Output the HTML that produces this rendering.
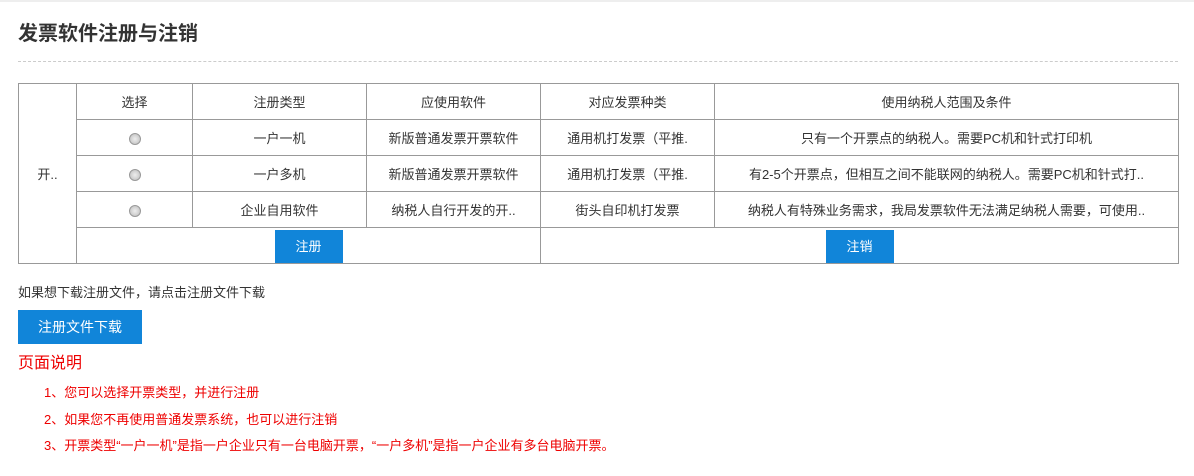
<!DOCTYPE html>
<html><head><meta charset="utf-8"><style>
body{margin:0;background:#fff;font-family:"Liberation Sans","Noto Sans CJK SC",sans-serif;color:#333;font-size:13px;width:1194px;height:476px;overflow:hidden;position:relative}
.top{position:absolute;left:0;top:0;width:1194px;height:2px;background:#eee}
h1{position:absolute;left:18px;top:19px;margin:0;font-size:20px;font-weight:bold;color:#333;line-height:30px}
.dash{position:absolute;left:18px;top:61px;width:1160px;border-top:1px dashed #ccc}
table{position:absolute;left:18px;top:83px;border-collapse:collapse;table-layout:fixed}
td{border:1px solid #999;height:35px;padding:0;text-align:center;white-space:nowrap;overflow:hidden;font-size:13px;vertical-align:middle}
.rad{display:inline-block;width:10px;height:10px;border-radius:50%;border:1px solid #999;background:radial-gradient(#eee,#bbb);vertical-align:middle}
.btn{display:inline-block;background:#1185d9;color:#fff;text-align:center}
.p{position:absolute;left:18px;top:283px;line-height:20px}
.b2{position:absolute;left:18px;top:310px;width:124px;height:34px;line-height:34px;font-size:14px}
.h2{position:absolute;left:18px;top:352px;color:#e00;font-size:16px;line-height:24px}
.li{position:absolute;left:44px;color:#e00;font-size:13px;line-height:20px}
</style></head><body>
<div class="top"></div>
<h1>发票软件注册与注销</h1>
<div class="dash"></div>
<table>
<colgroup><col style="width:58px"><col style="width:116px"><col style="width:174px"><col style="width:174px"><col style="width:174px"><col style="width:464px"></colgroup>
<tr><td rowspan="5">开..</td><td>选择</td><td>注册类型</td><td>应使用软件</td><td>对应发票种类</td><td>使用纳税人范围及条件</td></tr>
<tr><td><span class="rad"></span></td><td>一户一机</td><td>新版普通发票开票软件</td><td>通用机打发票（平推.</td><td>只有一个开票点的纳税人。需要PC机和针式打印机</td></tr>
<tr><td><span class="rad"></span></td><td>一户多机</td><td>新版普通发票开票软件</td><td>通用机打发票（平推.</td><td>有2-5个开票点，但相互之间不能联网的纳税人。需要PC机和针式打..</td></tr>
<tr><td><span class="rad"></span></td><td>企业自用软件</td><td>纳税人自行开发的开..</td><td>街头自印机打发票</td><td>纳税人有特殊业务需求，我局发票软件无法满足纳税人需要，可使用..</td></tr>
<tr><td colspan="3" style="vertical-align:bottom"><span class="btn" style="width:68px;height:33px;line-height:33px">注册</span></td><td colspan="2" style="vertical-align:bottom"><span class="btn" style="width:68px;height:33px;line-height:33px">注销</span></td></tr>
</table>
<div class="p">如果想下载注册文件，请点击注册文件下载</div>
<div class="btn b2">注册文件下载</div>
<div class="h2">页面说明</div>
<div class="li" style="top:383px">1、您可以选择开票类型，并进行注册</div>
<div class="li" style="top:410px">2、如果您不再使用普通发票系统，也可以进行注销</div>
<div class="li" style="top:436px">3、开票类型“一户一机”是指一户企业只有一台电脑开票，“一户多机”是指一户企业有多台电脑开票。</div>
</body></html>
